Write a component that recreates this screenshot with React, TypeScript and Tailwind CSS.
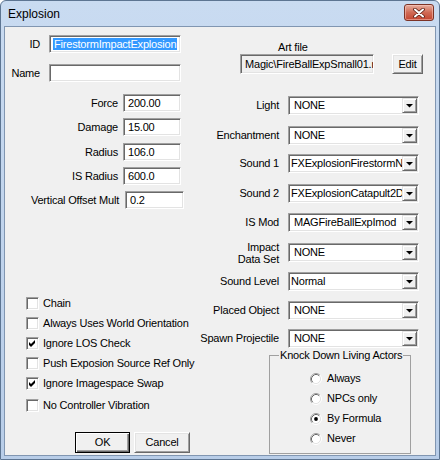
import React from "react";

const sunken =
  "border border-t-[#a0a0a0] border-l-[#a0a0a0] border-r-white border-b-white shadow-[inset_1px_1px_0_#696969,inset_-1px_-1px_0_#e3e3e3]";
const raised =
  "border border-t-white border-l-white border-r-[#696969] border-b-[#696969] shadow-[inset_1px_1px_0_#e3e3e3,inset_-1px_-1px_0_#a0a0a0]";

function Check({ label, checked, mt }: { label: string; checked?: boolean; mt: string }) {
  return (
    <div className={`${mt} ml-[21px] flex h-[13px] items-center whitespace-nowrap`}>
      <div className={`flex h-[13px] w-[13px] shrink-0 items-center justify-center bg-white ${sunken}`}>
        {checked && (
          <svg width="7" height="7" viewBox="0 0 7 7">
            <polygon points="0,2 2,4 6,0 6,3 2,7 0,5" fill="#000" />
          </svg>
        )}
      </div>
      <span className="ml-[4px] leading-[13px]">{label}</span>
    </div>
  );
}

function Radio({ label, on }: { label: string; on?: boolean }) {
  return (
    <div className="flex h-[13px] items-center whitespace-nowrap">
      <svg width="12" height="12" viewBox="0 0 12 12" className="shrink-0">
        <path d="M2.11 9.89 A5.5 5.5 0 0 1 9.89 2.11" stroke="#a0a0a0" strokeWidth="1" fill="none" />
        <path d="M9.89 2.11 A5.5 5.5 0 0 1 2.11 9.89" stroke="#ffffff" strokeWidth="1" fill="none" />
        <circle cx="6" cy="6" r="4.5" fill="#fff" />
        <path d="M2.82 9.18 A4.5 4.5 0 0 1 9.18 2.82" stroke="#696969" strokeWidth="1" fill="none" />
        <path d="M9.18 2.82 A4.5 4.5 0 0 1 2.82 9.18" stroke="#e3e3e3" strokeWidth="1" fill="none" />
        {on && <circle cx="6" cy="6" r="1.9" fill="#000" />}
      </svg>
      <span className="ml-[5px] leading-[13px]">{label}</span>
    </div>
  );
}

function Combo({ value, tight }: { value: string; tight?: boolean }) {
  return (
    <div className={`flex h-[19px] w-[131px] shrink-0 bg-white p-[1px] ${sunken}`}>
      <div className={`flex-1 overflow-hidden whitespace-nowrap leading-[15px] ${tight ? "pl-[1px]" : "pl-[4px]"}`}>
        {value}
      </div>
      <div className="flex h-[15px] w-[15px] shrink-0 items-center justify-center border border-t-[#e3e3e3] border-l-[#e3e3e3] border-r-[#696969] border-b-[#696969] bg-[#f0f0f0] shadow-[inset_1px_1px_0_#fff,inset_-1px_-1px_0_#a0a0a0]">
        <svg width="7" height="4" viewBox="0 0 7 4">
          <polygon points="0,0 7,0 3.5,3.6" fill="#000" />
        </svg>
      </div>
    </div>
  );
}

const numbers = [
  { label: "Force", value: "200.00", mt: "mt-[12px]" },
  { label: "Damage", value: "15.00", mt: "mt-[6px]" },
  { label: "Radius", value: "106.0", mt: "mt-[7px]" },
  { label: "IS Radius", value: "600.0", mt: "mt-[6px]" },
];

const combos = [
  { label: ["Light"], value: "NONE", mt: "mt-[22px]" },
  { label: ["Enchantment"], value: "NONE", mt: "mt-[11px]" },
  { label: ["Sound 1"], value: "FXExplosionFirestormNear", mt: "mt-[9px]", tight: true },
  { label: ["Sound 2"], value: "FXExplosionCatapult2D", mt: "mt-[11px]", tight: true },
  { label: ["IS Mod"], value: "MAGFireBallExpImod", mt: "mt-[10px]" },
  { label: ["Impact", "Data Set"], value: "NONE", mt: "mt-[11px]" },
  { label: ["Sound Level"], value: "Normal", mt: "mt-[10px]", tight: true },
  { label: ["Placed Object"], value: "NONE", mt: "mt-[10px]" },
  { label: ["Spawn Projectile"], value: "NONE", mt: "mt-[9px]" },
];

export default function App() {
  return (
    <div className="h-[460px] w-[440px] overflow-hidden rounded-t-[6px] border border-[#5d7592] bg-gradient-to-b from-[#c9dbf1] to-[#b8cde8] font-['Liberation_Sans',Arial,sans-serif] text-[11px] leading-[13px] text-black">
      {/* title bar */}
      <div className="flex h-[25px] justify-between pl-[7px] pr-[5px]">
        <span className="mt-[5px] text-[12px] leading-[16px] text-black">Explosion</span>
        <div className="mt-[3px] flex h-[17px] w-[30px] items-center justify-center rounded-[3px] border border-[#7c3326] bg-gradient-to-b from-[#e6ad9f] via-[#d06a55] to-[#c3432f] shadow-[inset_0_0_0_1px_rgba(255,210,200,0.5)]">
          <svg width="12" height="10" viewBox="0 0 12 10">
            <path d="M2 1.5 L10 8.5 M10 1.5 L2 8.5" stroke="#5a1d14" strokeWidth="3.6" strokeLinecap="round" />
            <path d="M2 1.5 L10 8.5 M10 1.5 L2 8.5" stroke="#ffffff" strokeWidth="2" strokeLinecap="round" />
          </svg>
        </div>
      </div>

      {/* client area */}
      <div className="mx-[3px] flex h-[430px] border border-[#8196b1] bg-[#f0f0f0] tracking-[-0.2px]">
        {/* left column */}
        <div className="flex w-[185px] shrink-0 flex-col">
          <div className="mt-[8px] flex items-center">
            <span className="w-[35px] text-right">ID</span>
            <div className={`ml-[9px] h-[18px] w-[132px] overflow-hidden whitespace-nowrap bg-white pl-[3px] leading-[16px] ${sunken}`}>
              <span className="bg-[#3399ff] px-[1px] text-white">FirestormImpactExplosion</span>
            </div>
          </div>
          <div className="mt-[11px] flex items-center">
            <span className="w-[35px] text-right">Name</span>
            <div className={`ml-[9px] h-[18px] w-[132px] bg-white ${sunken}`} />
          </div>

          {numbers.map((n) => (
            <div key={n.label} className={`${n.mt} flex items-center whitespace-nowrap`}>
              <span className="w-[113px] text-right">{n.label}</span>
              <div className={`ml-[5px] h-[18px] w-[58px] bg-white pl-[4px] leading-[16px] ${sunken}`}>{n.value}</div>
            </div>
          ))}
          <div className="mt-[6px] flex items-center whitespace-nowrap">
            <span className="w-[114px] text-right">Vertical Offset Mult</span>
            <div className={`ml-[6px] h-[18px] w-[59px] bg-white pl-[4px] leading-[16px] ${sunken}`}>0.2</div>
          </div>

          <Check mt="mt-[88px]" label="Chain" />
          <Check mt="mt-[7px]" label="Always Uses World Orientation" />
          <Check mt="mt-[7px]" label="Ignore LOS Check" checked />
          <Check mt="mt-[7px]" label="Push Exposion Source Ref Only" />
          <Check mt="mt-[7px]" label="Ignore Imagespace Swap" checked />
          <Check mt="mt-[9px]" label="No Controller Vibration" />

          <div className="ml-[70px] mt-[20px] flex gap-[4px]">
            <button className="h-[21px] w-[74px] border border-black bg-[#f0f0f0] leading-[19px] shadow-[inset_1px_1px_0_#fff,inset_-1px_-1px_0_#696969,inset_-2px_-2px_0_#a0a0a0]">
              OK
            </button>
            <button className={`h-[21px] w-[75px] bg-[#f0f0f0] leading-[19px] ${raised}`}>Cancel</button>
          </div>
        </div>

        {/* right column */}
        <div className="flex flex-1 flex-col">
          <span className="ml-[88px] mt-[14px] leading-[13px]">Art file</span>
          <div className="flex items-center">
            <div className={`ml-[50px] h-[20px] w-[134px] overflow-hidden whitespace-nowrap bg-[#f0f0f0] pl-[4px] leading-[18px] ${sunken}`}>
              Magic\FireBallExpSmall01.nif
            </div>
            <button className={`ml-[18px] h-[20px] w-[31px] bg-[#f0f0f0] leading-[18px] ${raised}`}>Edit</button>
          </div>

          {combos.map((c) => (
            <div key={c.label.join(" ")} className={`${c.mt} flex h-[19px] items-center whitespace-nowrap`}>
              <div className={`w-[89px] shrink-0 text-right ${c.label.length > 1 ? "leading-[12px]" : ""}`}>
                {c.label.map((l) => (
                  <div key={l}>{l}</div>
                ))}
              </div>
              <div className="ml-[9px]">
                <Combo value={c.value} tight={c.tight} />
              </div>
            </div>
          ))}

          <fieldset className="ml-[79px] mt-[1px] h-[105px] w-[142px] border border-[#a0a0a0] pt-[10px]">
            <legend className="ml-[9px] whitespace-nowrap px-[1px] leading-[13px]">Knock Down Living Actors</legend>
            <div className="ml-[40px] flex flex-col gap-[7px]">
              <Radio label="Always" />
              <Radio label="NPCs only" />
              <Radio label="By Formula" on />
              <Radio label="Never" />
            </div>
          </fieldset>
        </div>
      </div>
    </div>
  );
}
